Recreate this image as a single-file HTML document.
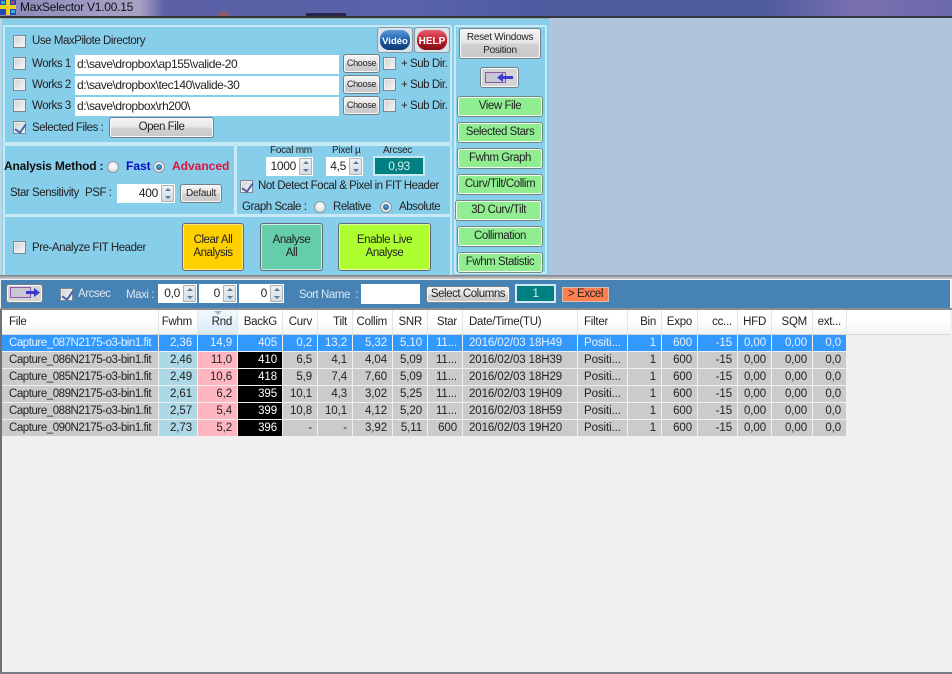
<!DOCTYPE html>
<html><head><meta charset="utf-8"><style>
html,body{margin:0;padding:0;width:952px;height:674px;overflow:hidden;background:#f0f0f0}
*{box-sizing:border-box}
body{font-family:"Liberation Sans",sans-serif;font-size:11.5px;letter-spacing:-.45px;color:#222;position:relative}
.a{position:absolute;white-space:nowrap}
.t{position:absolute;white-space:nowrap;line-height:14px;height:14px}
.cb{position:absolute;width:13px;height:13px;background:linear-gradient(135deg,#d0d0d0,#f8f8f8);border:1px solid #7a8a94;box-shadow:inset 0 0 0 1px #eee}
.cb.c::after{content:"";position:absolute;left:3px;top:0;width:5px;height:9px;border:solid #4a60a8;border-width:0 2px 2px 0;transform:rotate(35deg)}
.gb{position:absolute;border:2px solid #c8eaf6;border-radius:2px}
.btn{position:absolute;display:flex;align-items:center;justify-content:center;text-align:center;line-height:13px;border:1px solid #70808a;border-radius:3px;background:linear-gradient(#f4f4f4,#e6e6e6 48%,#d2d2d2 52%,#c8c8c8);box-shadow:inset 0 0 0 1px #f8f8f8;white-space:nowrap}
.g{background:#90ee90;box-shadow:inset 0 0 0 1px #f4fbf4;border:1px solid #6f8a80;left:457px;width:86px;height:21px;border-radius:3px}
.ch{left:343px;width:37px;height:19px;font-size:9px;letter-spacing:-.3px}
.in{position:absolute;background:#fff;left:75px;width:264px;height:19px;line-height:18px;padding-left:2px;white-space:nowrap;font-size:12px;letter-spacing:-.45px}
.sp{position:absolute;background:#fff;height:19px;line-height:18px;text-align:right;white-space:nowrap;font-size:12px;letter-spacing:-.3px}
.sp i{position:absolute;right:1px;top:1px;width:13px;height:17px;background:linear-gradient(#eef2f6,#d4dce4);border:1px solid #a9b4bd;border-radius:1px}
.sp i::before{content:"";position:absolute;left:2.5px;top:2px;border:3.5px solid transparent;border-top:0;border-bottom:3px solid #5a7a9a}
.sp i::after{content:"";position:absolute;left:2.5px;bottom:2px;border:3.5px solid transparent;border-bottom:0;border-top:3px solid #5a7a9a}
.sp b{font-weight:normal;position:absolute;right:17px;top:0}
.r{position:absolute;width:12px;height:12px;border-radius:50%;border:1px solid #8a9aa4;background:radial-gradient(circle at 50% 40%,#fff,#d4d4d4)}
.r.c::after{content:"";position:absolute;left:2px;top:2px;width:6px;height:6px;border-radius:50%;background:radial-gradient(circle at 50% 40%,#5ab0e0,#123a60)}
.sm{font-size:10px;letter-spacing:-.25px}
table{position:absolute;left:2px;top:310px;border-collapse:separate;border-spacing:0;table-layout:fixed;width:845px;font-size:11.5px;letter-spacing:-.1px}
th{height:25px;font-weight:normal;background:linear-gradient(#fff,#fff 45%,#f2f4f6);border-right:1px solid #e4e6e8;border-bottom:1px solid #d5d5d5;padding:0 5px 0 0;text-align:right;overflow:hidden;white-space:nowrap;color:#222;letter-spacing:-.25px}
th.l,td.l{text-align:left;padding:0 0 0 6px}
td{height:17px;line-height:16px;background:#cbcbcb;border-right:1px solid #f0f0f0;border-bottom:1px solid #f0f0f0;padding:0 5px 0 0;text-align:right;overflow:hidden;white-space:nowrap;color:#222}
td.n{letter-spacing:-.45px}
tr.s td{background:#3399ff!important;color:#e6f2ff!important}
td.f{background:#add8e6}td.p{background:#ffb6c1}td.k{background:#000;color:#fff}
</style></head><body>

<!-- title bar -->
<div class="a" style="left:0;top:0;width:952px;height:16px;background:linear-gradient(90deg,#8a88b8 0,#a09cc4 100px,#a9a0c4 140px,#5a5fa6 165px,#5860a6 300px,#5a64aa 400px,#4c5a9e 560px,#4c5a9e 760px,#7a70b0 860px,#6a68ac 952px)"></div>
<div class="a" style="left:218px;top:12px;width:12px;height:4px;background:#8a5a70"></div>
<div class="a" style="left:306px;top:13px;width:40px;height:3px;background:#2a2450"></div>
<div class="a" style="left:0;top:16px;width:952px;height:2px;background:#33363c"></div>
<div class="a" style="left:0;top:18px;width:952px;height:260px;background:#b0c4de"></div>
<svg class="a" style="left:0;top:0" width="16" height="15"><rect width="16" height="15" fill="#2848b8"/><rect x="6" y="0" width="4" height="15" fill="#f0d020"/><rect x="0" y="5" width="16" height="4" fill="#f0d020"/><rect x="1" y="1" width="4" height="3" fill="#30b0d0"/><rect x="11" y="10" width="4" height="3" fill="#30b0d0"/><rect x="11" y="1" width="3" height="3" fill="#e04020"/></svg>
<div class="t" style="left:20px;top:-1px;font-size:12px;letter-spacing:-.25px;height:16px;line-height:16px;color:#111">MaxSelector V1.00.15</div>

<!-- main panel -->
<div class="a" style="left:0;top:18px;width:549px;height:258px;background:#87ceeb;border-left:2px solid #c4d4dc;border-top:1px solid #9aa"></div>
<div class="gb" style="left:3px;top:25px;width:449px;height:119px"></div>
<div class="gb" style="left:3px;top:144px;width:233px;height:72px"></div>
<div class="gb" style="left:235px;top:144px;width:217px;height:72px"></div>
<div class="gb" style="left:3px;top:215px;width:449px;height:61px;border-bottom:0"></div>
<div class="gb" style="left:454px;top:25px;width:93px;height:249px"></div>

<!-- row group -->
<div class="cb" style="left:13px;top:35px"></div><div class="t" style="left:32px;top:34px">Use MaxPilote Directory</div>
<svg class="a" style="left:377px;top:27px" width="36" height="26"><defs><linearGradient id="gv" x1="0" y1="0" x2="0" y2="1"><stop offset="0" stop-color="#5a9ad8"/><stop offset=".55" stop-color="#1a5aa8"/><stop offset="1" stop-color="#103a70"/></linearGradient><linearGradient id="gh" x1="0" y1="0" x2="0" y2="1"><stop offset="0" stop-color="#e86070"/><stop offset=".55" stop-color="#c01828"/><stop offset="1" stop-color="#801018"/></linearGradient></defs><rect x=".5" y=".5" width="35" height="25" rx="3" fill="#d8e4ea" stroke="#8a9aa4"/><rect x="3" y="3" width="30" height="20" rx="9" fill="url(#gv)"/><text x="18" y="17" text-anchor="middle" font-family="Liberation Sans" font-weight="bold" font-size="9.5" letter-spacing="0" fill="#fff">Vidéo</text></svg>
<svg class="a" style="left:414px;top:27px" width="36" height="26"><rect x=".5" y=".5" width="35" height="25" rx="3" fill="#d8e4ea" stroke="#8a9aa4"/><rect x="3" y="3" width="30" height="20" rx="9" fill="url(#gh)"/><text x="18" y="17" text-anchor="middle" font-family="Liberation Sans" font-weight="bold" font-size="10" letter-spacing="0" fill="#fff">HELP</text></svg>

<div class="cb" style="left:13px;top:57px"></div><div class="t" style="left:32px;top:57px">Works 1</div>
<div class="in" style="top:55px">d:\save\dropbox\ap155\valide-20</div>
<div class="btn ch" style="top:54px">Choose</div>
<div class="cb" style="left:383px;top:57px"></div><div class="t" style="left:401px;top:57px">+ Sub Dir.</div>

<div class="cb" style="left:13px;top:78px"></div><div class="t" style="left:32px;top:78px">Works 2</div>
<div class="in" style="top:76px">d:\save\dropbox\tec140\valide-30</div>
<div class="btn ch" style="top:75px">Choose</div>
<div class="cb" style="left:383px;top:78px"></div><div class="t" style="left:401px;top:78px">+ Sub Dir.</div>

<div class="cb" style="left:13px;top:99px"></div><div class="t" style="left:32px;top:99px">Works 3</div>
<div class="in" style="top:97px">d:\save\dropbox\rh200\</div>
<div class="btn ch" style="top:96px">Choose</div>
<div class="cb" style="left:383px;top:99px"></div><div class="t" style="left:401px;top:99px">+ Sub Dir.</div>

<div class="cb c" style="left:13px;top:121px"></div><div class="t" style="left:32px;top:121px">Selected Files :</div>
<div class="btn" style="left:109px;top:117px;width:105px;height:21px">Open File</div>

<!-- analysis method -->
<div class="t" style="left:4px;top:159px;font-weight:bold;font-size:12px;color:#111;letter-spacing:-.2px">Analysis Method :</div>
<div class="r" style="left:107px;top:161px"></div>
<div class="t" style="left:126px;top:159px;font-weight:bold;font-size:12px;letter-spacing:0;color:#0a0ac8">Fast</div>
<div class="r c" style="left:153px;top:161px"></div>
<div class="t" style="left:172px;top:159px;font-weight:bold;font-size:12px;letter-spacing:0;color:#dc143c">Advanced</div>
<div class="t" style="left:10px;top:186px">Star Sensitivity</div>
<div class="t" style="left:85px;top:186px">PSF :</div>
<div class="sp" style="left:117px;top:184px;width:58px"><b>400</b><i></i></div>
<div class="btn" style="left:180px;top:184px;width:42px;height:19px;font-size:10px;letter-spacing:-.25px">Default</div>

<!-- focal -->
<div class="t sm" style="left:270px;top:144px">Focal mm</div>
<div class="t sm" style="left:332px;top:144px">Pixel µ</div>
<div class="t sm" style="left:383px;top:144px">Arcsec</div>
<div class="sp" style="left:266px;top:157px;width:47px"><b>1000</b><i></i></div>
<div class="sp" style="left:326px;top:157px;width:37px"><b>4,5</b><i></i></div>
<div class="a" style="left:373px;top:156px;width:52px;height:20px;background:#008080;border:2px solid #c8e8f4;color:#cfeeee;text-align:center;line-height:16px;font-size:12px">0,93</div>
<div class="cb c" style="left:240px;top:180px"></div><div class="t" style="left:258px;top:179px">Not Detect Focal &amp; Pixel in FIT Header</div>
<div class="t" style="left:242px;top:200px">Graph Scale :</div>
<div class="r" style="left:314px;top:201px"></div><div class="t" style="left:333px;top:200px">Relative</div>
<div class="r c" style="left:380px;top:201px"></div><div class="t" style="left:399px;top:200px">Absolute</div>

<!-- bottom row -->
<div class="cb" style="left:13px;top:241px"></div><div class="t" style="left:32px;top:241px">Pre-Analyze FIT Header</div>
<div class="btn" style="left:182px;top:223px;width:62px;height:48px;background:#ffd000;box-shadow:inset 0 0 0 1px #ffe880;border-color:#667">Clear All<br>Analysis</div>
<div class="btn" style="left:260px;top:223px;width:63px;height:48px;background:#66cdaa;box-shadow:inset 0 0 0 1px #c8f0e0;border-color:#667">Analyse<br>All</div>
<div class="btn" style="left:338px;top:223px;width:93px;height:48px;background:#adff2f;box-shadow:inset 0 0 0 1px #e0ffa8;border-color:#667">Enable Live<br>Analyse</div>

<!-- right column -->
<div class="btn" style="left:459px;top:28px;width:82px;height:31px;font-size:10px;letter-spacing:-.25px;line-height:13px">Reset Windows<br>Position</div>
<div class="btn" style="left:480px;top:67px;width:39px;height:21px;background:#d4d4d4"></div>
<svg class="a" style="left:484px;top:70px" width="32" height="15"><rect x="1.5" y="2.5" width="20" height="10" fill="#c8c8d4" stroke="#9058a8"/><path d="M13 7.5L19 3V6H29V9H19V12Z" fill="#3a3ad0"/></svg>
<div class="btn g" style="top:96px">View File</div>
<div class="btn g" style="top:122px">Selected Stars</div>
<div class="btn g" style="top:148px">Fwhm Graph</div>
<div class="btn g" style="top:174px">Curv/Tilt/Collim</div>
<div class="btn g" style="top:200px;left:455px;width:87px">3D Curv/Tilt</div>
<div class="btn g" style="top:226px">Collimation</div>
<div class="btn g" style="top:252px">Fwhm Statistic</div>

<!-- splitter -->
<div class="a" style="left:0;top:275px;width:952px;height:4px;background:linear-gradient(#7a7e84,#d0d2d4)"></div>

<!-- toolbar -->
<div class="a" style="left:0;top:279px;width:952px;height:31px;background:#f0f0f0"></div>
<div class="a" style="left:1px;top:280px;width:949px;height:28px;background:#4682b4"></div>
<div class="btn" style="left:6px;top:284px;width:37px;height:19px;background:#d4d4d4"></div>
<svg class="a" style="left:9px;top:286px" width="32" height="15"><rect x="1.5" y="1.5" width="20" height="10" fill="#c8c8d4" stroke="#9058a8"/><path d="M31 6.5L25 2V5H17V8H25V11Z" fill="#3a3ad0"/></svg>
<div class="cb c" style="left:60px;top:288px"></div>
<div class="t" style="left:78px;top:287px;color:#dce8f2">Arcsec</div>
<div class="t" style="left:126px;top:288px;color:#dce8f2">Maxi :</div>
<div class="sp" style="left:158px;top:284px;width:39px"><b>0,0</b><i></i></div>
<div class="sp" style="left:199px;top:284px;width:38px"><b>0</b><i></i></div>
<div class="sp" style="left:239px;top:284px;width:45px"><b>0</b><i></i></div>
<div class="t" style="left:299px;top:288px;color:#dce8f2">Sort Name&nbsp; :</div>
<div class="a" style="left:361px;top:284px;width:59px;height:20px;background:#fff"></div>
<div class="btn" style="left:426px;top:286px;width:84px;height:17px">Select Columns</div>
<div class="a" style="left:515px;top:284px;width:41px;height:19px;background:#008080;border:2px solid #d0e8f4;color:#cfeeee;text-align:center;line-height:14px;font-size:12px">1</div>
<div class="a" style="left:562px;top:287px;width:47px;height:15px;background:#ff7f50;border:1px solid #d8c0b0;text-align:center;line-height:13px;font-size:11.5px">&gt; Excel</div>

<!-- grid -->
<div class="a" style="left:0;top:308px;width:952px;height:2px;background:#8a8e92"></div>
<div class="a" style="left:0;top:310px;width:950px;height:25px;background:linear-gradient(#fff,#fff 45%,#f2f4f6);border-bottom:1px solid #d5d5d5"></div>
<table>
<colgroup><col style="width:157px"><col style="width:39px"><col style="width:40px"><col style="width:45px"><col style="width:35px"><col style="width:35px"><col style="width:40px"><col style="width:35px"><col style="width:35px"><col style="width:115px"><col style="width:50px"><col style="width:34px"><col style="width:36px"><col style="width:40px"><col style="width:34px"><col style="width:41px"><col style="width:34px"></colgroup>
<tr><th class="l" style="padding-left:7px">File</th><th>Fwhm</th><th style="background:linear-gradient(#f4f9fd,#d8eaf8);position:relative">Rnd</th><th>BackG</th><th>Curv</th><th>Tilt</th><th>Collim</th><th>SNR</th><th>Star</th><th class="l">Date/Time(TU)</th><th class="l">Filter</th><th>Bin</th><th>Expo</th><th>cc...</th><th>HFD</th><th>SQM</th><th>ext...</th></tr>
<tr class="s"><td class="l n" style="padding-left:7px">Capture_087N2175-o3-bin1.fit</td><td>2,36</td><td>14,9</td><td>405</td><td>0,2</td><td>13,2</td><td>5,32</td><td>5,10</td><td>11...</td><td class="l">2016/02/03 18H49</td><td class="l">Positi...</td><td>1</td><td>600</td><td>-15</td><td>0,00</td><td>0,00</td><td>0,0</td></tr>
<tr><td class="l n" style="padding-left:7px">Capture_086N2175-o3-bin1.fit</td><td class="f">2,46</td><td class="p">11,0</td><td class="k">410</td><td>6,5</td><td>4,1</td><td>4,04</td><td>5,09</td><td>11...</td><td class="l">2016/02/03 18H39</td><td class="l">Positi...</td><td>1</td><td>600</td><td>-15</td><td>0,00</td><td>0,00</td><td>0,0</td></tr>
<tr><td class="l n" style="padding-left:7px">Capture_085N2175-o3-bin1.fit</td><td class="f">2,49</td><td class="p">10,6</td><td class="k">418</td><td>5,9</td><td>7,4</td><td>7,60</td><td>5,09</td><td>11...</td><td class="l">2016/02/03 18H29</td><td class="l">Positi...</td><td>1</td><td>600</td><td>-15</td><td>0,00</td><td>0,00</td><td>0,0</td></tr>
<tr><td class="l n" style="padding-left:7px">Capture_089N2175-o3-bin1.fit</td><td class="f">2,61</td><td class="p">6,2</td><td class="k">395</td><td>10,1</td><td>4,3</td><td>3,02</td><td>5,25</td><td>11...</td><td class="l">2016/02/03 19H09</td><td class="l">Positi...</td><td>1</td><td>600</td><td>-15</td><td>0,00</td><td>0,00</td><td>0,0</td></tr>
<tr><td class="l n" style="padding-left:7px">Capture_088N2175-o3-bin1.fit</td><td class="f">2,57</td><td class="p">5,4</td><td class="k">399</td><td>10,8</td><td>10,1</td><td>4,12</td><td>5,20</td><td>11...</td><td class="l">2016/02/03 18H59</td><td class="l">Positi...</td><td>1</td><td>600</td><td>-15</td><td>0,00</td><td>0,00</td><td>0,0</td></tr>
<tr><td class="l n" style="padding-left:7px">Capture_090N2175-o3-bin1.fit</td><td class="f">2,73</td><td class="p">5,2</td><td class="k">396</td><td>-</td><td>-</td><td>3,92</td><td>5,11</td><td>600</td><td class="l">2016/02/03 19H20</td><td class="l">Positi...</td><td>1</td><td>600</td><td>-15</td><td>0,00</td><td>0,00</td><td>0,0</td></tr>
</table>
<div class="a" style="left:214px;top:311px;border:4px solid transparent;border-top:4px solid #9ab8d4;border-bottom:0"></div>
<div class="a" style="left:0;top:310px;width:2px;height:364px;background:#6e7278"></div>
<div class="a" style="left:0;top:672px;width:952px;height:2px;background:#7a7e84"></div>
</body></html>
